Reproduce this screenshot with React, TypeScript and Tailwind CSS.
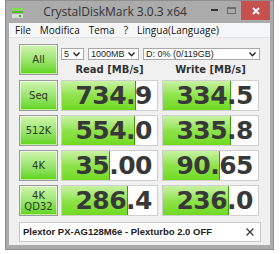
import React from 'react';

const rows = [
  { label: 'Seq', read: '734.9', write: '334.5', rFill: 'w-[74px]', wFill: 'w-[68px]' },
  { label: '512K', read: '554.0', write: '335.8', rFill: 'w-[73px]', wFill: 'w-[68px]' },
  { label: '4K', read: '35.00', write: '90.65', rFill: 'w-[48px]', wFill: 'w-[57px]' },
  { label: '4K\nQD32', read: '286.4', write: '236.0', rFill: 'w-[66px]', wFill: 'w-[66px]' },
];

const GreenButton = ({ children }: { children: React.ReactNode }) => (
  <div className="w-[39px] h-[31px] shrink-0 border border-[#9a9a9a] bg-gradient-to-b from-[#d2f5b0] to-[#5ed400] shadow-[inset_0_0_0_1px_rgba(255,255,255,0.6)] flex items-center justify-center text-center text-[10px] leading-[11px] text-[#2b3a20] whitespace-pre-line font-['DejaVu_Sans',sans-serif]">
    {children}
  </div>
);

const ValueCell = ({ value, fill }: { value: string; fill: string }) => (
  <div className="relative w-[97px] h-[31px] shrink-0 border border-[#cfcfcf] bg-white overflow-hidden">
    <div className={`absolute left-0 top-0 bottom-0 ${fill} bg-gradient-to-b from-[#c9f2a2] via-[#8fe34a] to-[#70da1e] border-r border-[#3d9c0a]`} />
    <div className="relative h-full flex items-center justify-end pr-[5px] font-['DejaVu_Sans',sans-serif] font-bold text-[25px] leading-none text-[#383838] tracking-[-0.5px]">
      {value}
    </div>
  </div>
);

const Combo = ({ text, w }: { text: string; w: string }) => (
  <div className={`${w} h-[12px] border border-[#a8a8a8] bg-white flex items-center justify-between pl-[2px] pr-[3px] text-[9px] leading-none text-[#222] font-['Liberation_Sans',sans-serif]`}>
    <span>{text}</span>
    <svg width="7" height="5" viewBox="0 0 7 5">
      <path d="M0.5 0.5 L3.5 3.8 L6.5 0.5" fill="none" stroke="#222" strokeWidth="1.3" />
    </svg>
  </div>
);

export default function App() {
  return (
    <div className="w-[280px] h-[254px] bg-white overflow-hidden">
      <div className="ml-[5px] w-[269px] h-[250px] bg-[#ababab] border border-[#8e8e8e] flex flex-col">
        {/* title bar */}
        <div className="h-[22px] flex items-start">
          <div className="pl-[6px] pt-[7px]">
            <svg width="11" height="11" viewBox="0 0 11 11">
              <rect x="0" y="0" width="11" height="2" fill="#7fe04a" />
              <rect x="0" y="3" width="11" height="2" fill="#4cc21c" />
              <rect x="0" y="6" width="11" height="4" fill="#d9d9d9" />
              <rect x="7" y="7" width="2" height="2" fill="#3ab11a" />
            </svg>
          </div>
          <div className="flex-1 text-center pt-[4px] text-[12px] leading-[14px] text-[#333] font-['Open_Sans',sans-serif]">
            CrystalDiskMark 3.0.3 x64
          </div>
          <div className="flex items-start">
            <div className="w-[14px] h-[18px] flex items-center justify-center">
              <div className="w-[7px] h-[2px] bg-[#333]" />
            </div>
            <div className="w-[20px] h-[18px] flex items-center justify-center">
              <div className="w-[9px] h-[7px] border border-[#6a6a6a] border-t-2" />
            </div>
            <div className="w-[29px] h-[19px] bg-[#c75050] flex items-center justify-center mr-[3px]">
              <svg width="8" height="8" viewBox="0 0 8 8">
                <path d="M1 1 L7 7 M7 1 L1 7" stroke="white" strokeWidth="1.8" />
              </svg>
            </div>
          </div>
        </div>
        {/* menu */}
        <div className="mx-[3px] h-[15px] bg-[#f6f7f9] border-b border-[#e3e3e3] flex items-center gap-[9px] pl-[6px] text-[10px] leading-none text-[#111] font-['Open_Sans',sans-serif]">
          <span>File</span>
          <span>Modifica</span>
          <span>Tema</span>
          <span>?</span>
          <span>Lingua(Language)</span>
        </div>
        {/* client */}
        <div className="mx-[3px] mb-[4px] flex-1 bg-[#f0f0f0] pl-[10px] pt-[6px] flex flex-col gap-[4px]">
          <div className="flex gap-[3px]">
            <GreenButton>All</GreenButton>
            <div className="flex flex-col">
              <div className="flex gap-[4px] pt-[4px]">
                <Combo text="5" w="w-[23px]" />
                <Combo text="1000MB" w="w-[51px]" />
                <Combo text="D: 0% (0/119GB)" w="w-[117px]" />
              </div>
              <div className="flex gap-[4px] pt-[4px] font-['DejaVu_Sans',sans-serif] font-bold text-[10px] leading-[12px] text-[#333]">
                <div className="w-[97px] text-center">Read [MB/s]</div>
                <div className="w-[97px] text-center">Write [MB/s]</div>
              </div>
            </div>
          </div>
          {rows.map((r) => (
            <div key={r.label} className="flex gap-[3px]">
              <GreenButton>{r.label}</GreenButton>
              <div className="flex gap-[4px]">
                <ValueCell value={r.read} fill={r.rFill} />
                <ValueCell value={r.write} fill={r.wFill} />
              </div>
            </div>
          ))}
          <div className="mt-[2px] w-[242px] h-[20px] bg-white border border-[#c8c8c8] flex items-center justify-between pl-[3px] pr-[6px] font-['Liberation_Sans',sans-serif] font-bold text-[9.5px] text-[#222]">
            <span>Plextor PX-AG128M6e - Plexturbo 2.0 OFF</span>
            <svg width="8" height="8" viewBox="0 0 8 8">
              <path d="M0.5 0.5 L7.5 7.5 M7.5 0.5 L0.5 7.5" stroke="#333" strokeWidth="1.2" />
            </svg>
          </div>
        </div>
      </div>
    </div>
  );
}
